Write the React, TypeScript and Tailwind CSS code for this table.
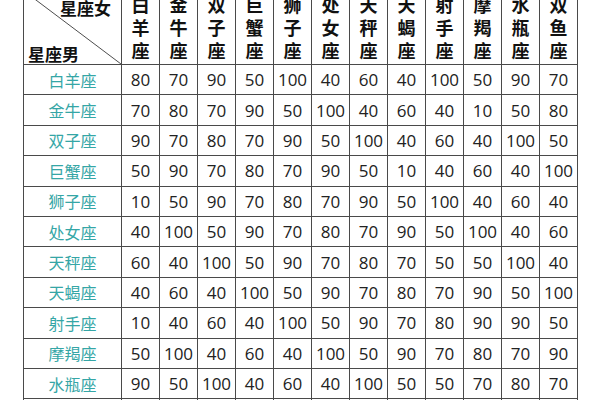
import React from 'react';

// Zodiac compatibility chart: rows = 星座男, columns = 星座女.
const SIGNS = [
  '白羊座',
  '金牛座',
  '双子座',
  '巨蟹座',
  '狮子座',
  '处女座',
  '天秤座',
  '天蝎座',
  '射手座',
  '摩羯座',
  '水瓶座',
  '双鱼座',
];

const SCORES: number[][] = [
  [80, 70, 90, 50, 100, 40, 60, 40, 100, 50, 90, 70],
  [70, 80, 70, 90, 50, 100, 40, 60, 40, 10, 50, 80],
  [90, 70, 80, 70, 90, 50, 100, 40, 60, 40, 100, 50],
  [50, 90, 70, 80, 70, 90, 50, 10, 40, 60, 40, 100],
  [10, 50, 90, 70, 80, 70, 90, 50, 100, 40, 60, 40],
  [40, 100, 50, 90, 70, 80, 70, 90, 50, 100, 40, 60],
  [60, 40, 100, 50, 90, 70, 80, 70, 50, 50, 100, 40],
  [40, 60, 40, 100, 50, 90, 70, 80, 70, 90, 50, 100],
  [10, 40, 60, 40, 100, 50, 90, 70, 80, 90, 90, 50],
  [50, 100, 40, 60, 40, 100, 50, 90, 70, 80, 70, 90],
  [90, 50, 100, 40, 60, 40, 100, 50, 50, 70, 80, 70],
  [70, 80, 50, 100, 40, 60, 40, 100, 50, 90, 70, 80],
];

const CJK = "font-['Noto_Sans_CJK_SC',_'Noto_Sans',_sans-serif]";
const NUM = "font-['Open_Sans',_'Noto_Sans',_sans-serif]";

export default function App() {
  return (
    <div className="h-[400px] w-[600px] overflow-hidden bg-white">
      <table className="ml-[23px] mt-[-10px] w-[555px] table-fixed border-collapse">
        <colgroup>
          <col className="w-[98px]" />
          {SIGNS.map((s) => (
            <col key={s} className="w-[38px]" />
          ))}
        </colgroup>
        <thead>
          <tr className="h-[74px]">
            <th className="relative border border-[#4a4a4a] p-0">
              <svg
                className="absolute inset-0 h-full w-full"
                viewBox="0 0 98 74"
                preserveAspectRatio="none"
              >
                <line x1="0" y1="0" x2="98" y2="74" stroke="#4a4a4a" strokeWidth="1" />
              </svg>
              <div className={`relative flex h-[73px] flex-col justify-between ${CJK}`}>
                <span className="pr-[10px] pt-[7px] text-right text-[17px] leading-[20px] font-bold text-[#111]">
                  星座女
                </span>
                <span className="pb-0 pl-[4px] text-left text-[17px] leading-[20px] font-bold text-[#111]">
                  星座男
                </span>
              </div>
            </th>
            {SIGNS.map((s) => (
              <th
                key={s}
                className={`border border-[#4a4a4a] p-0 align-bottom text-[18px] leading-[23px] font-bold text-[#111] ${CJK}`}
              >
                <div className="flex flex-col items-center pb-[2px]">
                  {s.split('').map((ch, i) => (
                    <span key={i}>{ch}</span>
                  ))}
                </div>
              </th>
            ))}
          </tr>
        </thead>
        <tbody>
          {SIGNS.map((s, r) => (
            <tr key={s} className="h-[30.4px]">
              <td
                className={`border border-[#4a4a4a] p-0 text-center text-[16px] leading-none text-[#35a6a6] ${CJK}`}
              >
                {s}
              </td>
              {SCORES[r].map((v, c) => (
                <td
                  key={c}
                  className={`border border-[#4a4a4a] p-0 text-center text-[17px] leading-none text-[#222] ${NUM}`}
                >
                  {v}
                </td>
              ))}
            </tr>
          ))}
        </tbody>
      </table>
    </div>
  );
}
